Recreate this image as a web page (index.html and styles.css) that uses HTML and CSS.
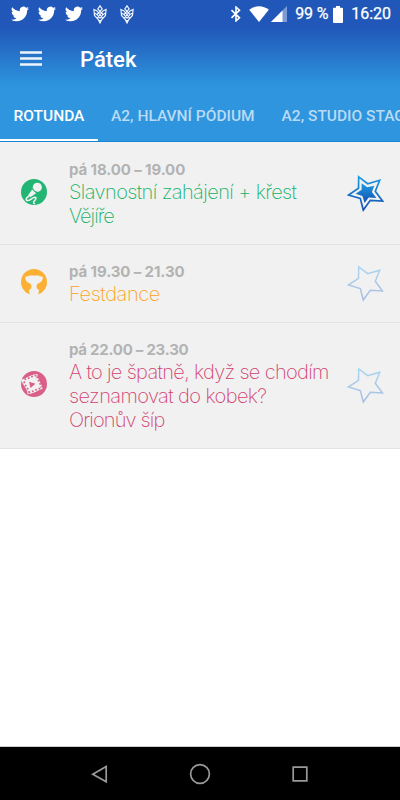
FILE: index.html
```html
<!DOCTYPE html>
<html lang="cs">
<head>
<meta charset="utf-8">
<title>Pátek</title>
<link rel="stylesheet" href="styles.css">
</head>
<body>
<svg class="defs" width="0" height="0">
  <defs>
    <linearGradient id="blue" x1="0" y1="0" x2="0" y2="1"><stop offset="0" stop-color="#1c9be0"/><stop offset="1" stop-color="#1550b4"/></linearGradient>
    <linearGradient id="pale" x1="0" y1="0" x2="0" y2="1"><stop offset="0" stop-color="#a9d5f0"/><stop offset="1" stop-color="#a9bde2"/></linearGradient>
    <symbol id="bird" viewBox="0 0 24 24"><path fill="#fff" d="M23.95 4.57a10 10 0 0 1-2.82.77 4.96 4.96 0 0 0 2.16-2.72c-.95.55-2 .95-3.13 1.18a4.92 4.92 0 0 0-8.38 4.48C7.69 8.1 4.07 6.13 1.64 3.16a4.93 4.93 0 0 0 1.52 6.57 4.9 4.9 0 0 1-2.23-.61v.06a4.92 4.92 0 0 0 3.95 4.83 5 5 0 0 1-2.21.08 4.94 4.94 0 0 0 4.6 3.42A9.87 9.87 0 0 1 0 19.54a14 14 0 0 0 7.55 2.21c9.05 0 14-7.5 14-13.98 0-.21 0-.42-.02-.63a9.94 9.94 0 0 0 2.42-2.57z"/></symbol>
    <symbol id="knot" viewBox="0 0 14 19"><path fill="none" stroke="#f2f6ff" stroke-width="1.15" d="M7 .8 4.8 4 10 9.500 7 13 4 9.500 9.200 4zM.9 4.500 4 6 9.500 13 7 18 4.500 13 10 6l3.100-1.500-.6 6L7 16.500 1.500 10.500zM1.300 8 4 9.500M12.700 8 10 9.500"/></symbol>
    <symbol id="star" viewBox="0 0 37 37"><path d="M11.700 1.800 20.700 8.700 32.700 5.200 28.300 16.300 35.500 26 23.300 25.300 16.300 35 13.300 23.500 1.500 20 11.500 13.300z"/></symbol>
  </defs>
</svg>
<header class="header">
  <div class="status">
    <div class="notices">
      <svg class="bird"><use href="#bird"/></svg>
      <svg class="bird"><use href="#bird"/></svg>
      <svg class="bird"><use href="#bird"/></svg>
      <svg class="knot"><use href="#knot"/></svg>
      <svg class="knot"><use href="#knot"/></svg>
    </div>
    <div class="system">
      <svg class="bluetooth" viewBox="0 0 12 16"><path fill="none" stroke="#fff" stroke-width="1.600" d="m1.500 4.200 8 7.600L6 14.900V1.100l3.500 3.100-8 7.600"/></svg>
      <svg class="wifi" viewBox="0 0 20 16"><path fill="#fff" d="M10 16 .2 3.800Q4.500.2 10 .2t9.800 3.600z"/></svg>
      <svg class="signal" viewBox="0 0 16 16"><path fill="#7a9bd8" d="M16 0v16H0z"/><path fill="#fff" d="M11.500 4.500V16H0z"/></svg>
      <span class="percent">99 %</span>
      <svg class="battery" viewBox="0 0 10 17"><path fill="#fff" d="M3 0h4v1.800h2q1 0 1 1V16q0 1-1 1H1q-1 0-1-1V2.800q0-1 1-1h2z"/></svg>
      <span class="clock">16:20</span>
    </div>
  </div>
  <div class="bar">
    <svg class="menu" viewBox="0 0 22 16"><path stroke="#fff" stroke-width="2.300" stroke-opacity=".92" d="M0 2.500h22M0 8.500h22M0 14.500h22"/></svg>
    <h1 class="title">Pátek</h1>
  </div>
  <nav class="tabs">
    <a class="tab active">ROTUNDA</a>
    <a class="tab">A2, HLAVNÍ PÓDIUM</a>
    <a class="tab">A2, STUDIO STAGE</a>
  </nav>
</header>
<main class="list">
  <article class="row green">
    <svg class="kind" viewBox="0 0 26 26"><circle cx="13" cy="13" r="13" fill="#22b573"/><circle cx="16.300" cy="8.300" r="4.600" fill="#f1f1f1"/><path fill="#f1f1f1" d="m11.200 10.500 3.900 3.700-5.800 4.100-2.300-2z"/><path fill="none" stroke="#22b573" stroke-width=".8" d="M11 8.500q1.500 4.500 6.300 5.200"/><path fill="none" stroke="#f1f1f1" stroke-width="1.500" stroke-linecap="round" d="M7.500 17.500c-3 1.500-3 4-.8 4.100 2.600 0 4.800-3.400 7-3.400 2.500.3.800 2.600-.5 3.900-1 1-.8 2 .2 2.600"/></svg>
    <div class="text"><div class="time">pá 18.00 – 19.00</div><div class="name"><span class="l1">Slavnostní zahájení + křest</span><br><span class="l2">Vějíře</span></div></div>
    <svg class="star filled"><use href="#star"/><path class="core" d="m14.600 8.200 5.700 4 7-1.500-2.400 6.300 4.500 6.100-7.700-.7-4.100 5.700-2.200-7-6.800-2.300 6-4.100z"/></svg>
  </article>
  <article class="row orange">
    <svg class="kind" viewBox="0 0 26 26"><circle cx="13" cy="13" r="13" fill="#fbb034"/><path fill="#f1f1f1" d="M4.200 8.500q0-1 1.200-1 1.600-.2 3.100-1h9q1.500.8 3.100 1 1.200 0 1.200 1-.2 4.100-3.300 5.300-2.300.8-3 2.700l.3 3q2.200.7 2.300 2.200L17 26H9l-1.100-4.300q.1-1.500 2.300-2.200l.3-3q-.7-1.900-3-2.700Q4.400 12.600 4.200 8.500z"/></svg>
    <div class="text"><div class="time">pá 19.30 – 21.30</div><div class="name"><span class="l3">Festdance</span></div></div>
    <svg class="star"><use href="#star"/></svg>
  </article>
  <article class="row pink">
    <svg class="kind" viewBox="0 0 26 26"><circle cx="13" cy="13" r="13" fill="#d95f88"/><path fill="#f1f1f1" d="M0 8.500C5 8 11 2.800 16.500 3c-.5 5 4.500 9 5 15-4 .5-9 5.500-15 5C7 18 1.500 14 0 8.500z"/><path fill="none" stroke="#d95f88" stroke-width="1.700" stroke-dasharray="1.700 1.900" d="M3.500 8.300c4-.5 7.500-3.300 12-4M7.500 21.500c4.500-.5 8-3.700 12.500-4.300M3 10.500c1 4.500 4.500 7 5 11M16 5.500c1 4 3.500 7 4.200 11"/><path fill="#d95f88" d="m8 10.800 6.500 2-5 4.200z"/></svg>
    <div class="text"><div class="time">pá 22.00 – 23.30</div><div class="name"><span class="l4">A to je špatně, když se chodím</span><br><span class="l5">seznamovat do kobek?</span><br><span class="l6">Orionův šíp</span></div></div>
    <svg class="star"><use href="#star"/></svg>
  </article>
</main>
<footer class="navbar">
  <svg viewBox="0 0 24 24"><path d="M18.200 4.500v15.300L4.800 12.200z"/></svg>
  <svg viewBox="0 0 24 24"><circle cx="12" cy="12" r="9.400"/></svg>
  <svg viewBox="0 0 24 24"><path d="M5.200 5.200h13.600v13.600H5.200z"/></svg>
</footer>
</body>
</html>
```
FILE: styles.css
```css
* { box-sizing: border-box; }
body { margin: 0; width: 400px; height: 800px; overflow: hidden; display: flex; flex-direction: column; background: #fff; font-family: Roboto, sans-serif; }
svg { display: block; flex: none; }
.defs { position: absolute; }
.header { height: 142px; flex: none; overflow: hidden; background: linear-gradient(#2157b8 0, #2157b8 27px, #2c93dd 84px, #2f95de 90px); border-bottom: 1px solid #1587d3; display: flex; flex-direction: column; }
.status { height: 28px; flex: none; display: flex; justify-content: space-between; padding: 0 9px 0 11px; color: #fff; }
.notices, .system { display: flex; align-items: center; }
.notices { gap: 9px; }
.bird { width: 18px; height: 18px; }
.knot { width: 14px; height: 19px; margin-left: 1px; margin-right: 3px; }
.bluetooth { width: 12px; height: 16px; margin-right: 7px; }
.wifi { width: 20px; height: 16px; margin-right: 2px; }
.signal { width: 16px; height: 16px; margin-right: 8px; }
.percent, .clock { font-size: 16px; line-height: 28px; font-weight: 400; white-space: nowrap; -webkit-text-stroke: .25px #fff; }
.percent { width: 33px; margin-right: 5px; letter-spacing: -.1px; }
.battery { width: 10px; height: 17px; margin-right: 8px; }
.bar { height: 62px; flex: none; display: flex; align-items: center; padding-left: 20px; }
.menu { width: 22px; height: 16px; margin-right: 38px; margin-top: -3px; }
.title { margin: 0; font-size: 22px; font-weight: 500; color: #fff; }
.tabs { flex: 1; display: flex; white-space: nowrap; }
.tab { flex: none; padding: 0 13.500px; height: 52px; line-height: 53px; font-size: 15.500px; font-weight: 500; color: #b9dbf4; }
.tab.active { width: 97.500px; color: #fff; border-bottom: 3px solid #fff; }
.tabs, .tab.active { margin-bottom: -1px; }
.list { padding-top: 1px; background: #f1f1f1; }
.row { display: flex; align-items: center; padding: 0 16px 0 21px; border-bottom: 1px solid #e3e3e3; }
.kind { width: 26px; height: 26px; margin-right: 22px; margin-top: -3px; }
.text { flex: 1; min-width: 0; padding: 16px 0; }
.time { height: 21px; line-height: 22px; font-family: Inter, sans-serif; font-size: 15px; font-weight: 700; color: #b3b3b3; letter-spacing: -.1px; }
.pink .time { letter-spacing: -.25px; }
.name { font-family: Inter, sans-serif; font-size: 20px; line-height: 24px; font-weight: 200; white-space: nowrap; }
.l1 { letter-spacing: -.58px; }
.l2 { letter-spacing: -1px; }
.l3 { letter-spacing: -.4px; }
.l4 { letter-spacing: -.67px; }
.l5 { letter-spacing: -.6px; }
.l6 { letter-spacing: -.85px; }
.green .name { color: #12b266; }
.orange .name { color: #fba31a; }
.pink .name { color: #d13f70; }
.star { width: 37px; height: 37px; fill: none; stroke: url(#pale); stroke-width: 1.500; }
.star.filled { stroke: url(#blue); stroke-width: 1.700; }
.core { fill: url(#blue); stroke: none; }
.navbar { margin-top: auto; height: 54px; flex: none; background: #000; border-top: 1px solid #ccc; display: flex; align-items: center; justify-content: center; gap: 76px; }
.navbar svg { width: 24px; height: 24px; fill: none; stroke: #999; stroke-width: 1.700; }
```
